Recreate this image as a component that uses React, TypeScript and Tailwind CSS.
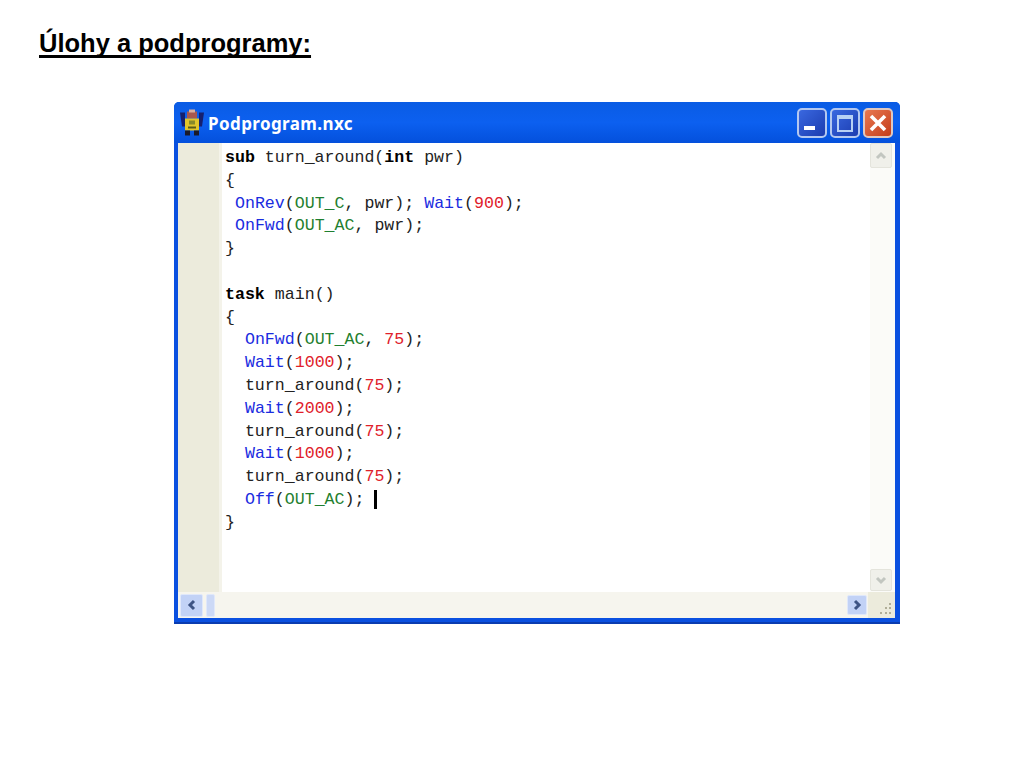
const KEYWORD = 'font-bold text-black';
const FN = 'text-[#1a2ce0]';
const CONST = 'text-[#1f7f2f]';
const NUM = 'text-[#e0202a]';
const PUNCT = 'text-[#222222]';

type Span = [string, string?];

// one entry per editor line
const LINES: Span[][] = [
  [['sub', KEYWORD], [' turn_around('], ['int', KEYWORD], [' pwr)']],
  [['{']],
  [[' '], ['OnRev', FN], ['('], ['OUT_C', CONST], [', pwr); '], ['Wait', FN], ['('], ['900', NUM], [');']],
  [[' '], ['OnFwd', FN], ['('], ['OUT_AC', CONST], [', pwr);']],
  [['}']],
  [[' ']],
  [['task', KEYWORD], [' main()']],
  [['{']],
  [['  '], ['OnFwd', FN], ['('], ['OUT_AC', CONST], [', '], ['75', NUM], [');']],
  [['  '], ['Wait', FN], ['('], ['1000', NUM], [');']],
  [['  turn_around('], ['75', NUM], [');']],
  [['  '], ['Wait', FN], ['('], ['2000', NUM], [');']],
  [['  turn_around('], ['75', NUM], [');']],
  [['  '], ['Wait', FN], ['('], ['1000', NUM], [');']],
  [['  turn_around('], ['75', NUM], [');']],
  [['  '], ['Off', FN], ['('], ['OUT_AC', CONST], ['); ']],
  [['}']],
];

function RobotIcon() {
  return (
    <svg width="24" height="27" viewBox="0 0 24 26" className="shrink-0">
      <path d="M0 3h5v14H2zM24 3h-5v14h3z" fill="#16206e" />
      <rect x="7" y="2" width="10" height="7" fill="#a8584e" />
      <rect x="9" y="0" width="6" height="3" fill="#d8b0a0" />
      <rect x="5" y="9" width="14" height="12" fill="#e2c52a" />
      <rect x="9" y="11" width="6" height="4" fill="#8a8a2a" />
      <rect x="8" y="17" width="8" height="2" fill="#5a5a1a" />
      <rect x="5" y="21" width="5" height="5" fill="#1a1a2a" />
      <rect x="14" y="21" width="5" height="5" fill="#1a1a2a" />
    </svg>
  );
}

function CaptionButtons() {
  return (
    <div className="flex gap-[3px] mr-[7px] mt-[1px]">
      <div className="w-[30px] h-[30px] rounded-[5px] border-2 border-[#b4c8f0] bg-gradient-to-br from-[#3a68e0] to-[#1c3cb0] flex items-end pl-[5px] pb-[6px]">
        <div className="w-[11px] h-[4px] bg-white" />
      </div>
      <div className="w-[30px] h-[30px] rounded-[5px] border-2 border-[#b4c8f0] bg-gradient-to-br from-[#3a68e0] to-[#1c3cb0] flex items-center justify-center">
        <div className="w-[16px] h-[17px] border-2 border-t-4 border-[#b8d0f4]" />
      </div>
      <div className="w-[30px] h-[30px] rounded-[5px] border-2 border-[#e0c8c0] bg-gradient-to-br from-[#e87850] to-[#c43c18] flex items-center justify-center">
        <svg width="18" height="18" viewBox="0 0 18 18">
          <path d="M2 2l14 14M16 2L2 16" stroke="#fff" strokeWidth="3.6" />
        </svg>
      </div>
    </div>
  );
}

function ScrollArrow({ d, tall }: { d: string; tall?: boolean }) {
  return (
    <div
      className={
        tall
          ? 'w-[22px] h-[25px] rounded-[2px] border border-[#e4e4dc] bg-[#f0f0ea] flex items-center justify-center'
          : 'w-[22px] h-[22px] rounded-[2px] border border-[#e4e4dc] bg-[#f0f0ea] flex items-center justify-center'
      }
    >
      <svg width="14" height="14" viewBox="0 0 14 14">
        <path d={d} fill="none" stroke="#c2c6c0" strokeWidth="3" />
      </svg>
    </div>
  );
}

export default function App() {
  return (
    <div className="w-[1024px] h-[768px] bg-white overflow-hidden font-['Liberation_Sans',sans-serif]">
      <h1 className="pt-[28px] pl-[39px] text-[25.5px] leading-[30px] font-bold text-black underline decoration-[3px] underline-offset-[3px] [text-decoration-skip-ink:none]">
        Úlohy a podprogramy:
      </h1>

      <div className="mt-[44px] ml-[174px] w-[726px] h-[522px] bg-[#0a50e0] rounded-t-[5px] border-b-2 border-[#0a3cb0] flex flex-col">
        {/* title bar */}
        <div className="h-[41px] shrink-0 flex items-center pl-[6px] rounded-t-[5px] bg-gradient-to-b from-[#0a5ce4] via-[#0c60f0] to-[#0450dc]">
          <RobotIcon />
          <span className="ml-[4px] mt-[3px] flex-1 font-['Noto_Sans',sans-serif] text-[17px] font-bold text-white tracking-[0.4px]">
            Podprogram.nxc
          </span>
          <CaptionButtons />
        </div>

        {/* client area */}
        <div className="flex-1 ml-[4px] mr-[5px] mb-[4px] flex flex-col bg-white min-h-0">
          <div className="flex-1 flex min-h-0">
            <div className="w-[41px] bg-[#ecebdc] shrink-0" />
            <div className="w-[3px] bg-[#f4f3ea] shrink-0" />
            <pre className="flex-1 pl-[3px] pt-[4px] font-['Liberation_Mono',monospace] text-[16.6px] leading-[22.8px] text-[#222222]">
              {LINES.map((line, i) => (
                <div key={i} className="h-[22.8px] flex">
                  <span className="whitespace-pre">
                    {line.map(([text, cls], j) => (
                      <span key={j} className={cls ?? PUNCT}>
                        {text}
                      </span>
                    ))}
                  </span>
                  {i === 15 && <span className="inline-block w-[3px] h-[19px] mt-[1px] bg-black" />}
                </div>
              ))}
            </pre>
            {/* vertical scrollbar */}
            <div className="w-[25px] shrink-0 bg-[#fbfbf8] flex flex-col justify-between pb-[1px]">
              <ScrollArrow tall d="M3 9l4-4 4 4" />
              <ScrollArrow d="M3 5l4 4 4-4" />
            </div>
          </div>

          {/* horizontal scrollbar */}
          <div className="h-[26px] shrink-0 bg-[#f6f5ee] flex items-center">
            <div className="ml-[2px] w-[23px] h-[23px] rounded-[2px] border border-[#e0e8fa] bg-[#c2d2f6] flex items-center justify-center">
              <svg width="14" height="14" viewBox="0 0 14 14">
                <path d="M9 3L5 7l4 4" fill="none" stroke="#3e5484" strokeWidth="3" />
              </svg>
            </div>
            <div className="ml-[3px] w-[9px] h-[23px] rounded-[2px] border border-[#e0e8fa] bg-[#ccd9f6]" />
            <div className="flex-1" />
            <div className="w-[20px] h-[20px] rounded-[2px] border border-[#e0e8fa] bg-[#c2d2f6] flex items-center justify-center">
              <svg width="14" height="14" viewBox="0 0 14 14">
                <path d="M5 3l4 4-4 4" fill="none" stroke="#3e5484" strokeWidth="3" />
              </svg>
            </div>
            <div className="ml-[1px] w-[27px] h-[26px] bg-[#ecebdc] flex items-end justify-end pr-[3px] pb-[3px]">
              <svg width="14" height="14" viewBox="0 0 14 14" fill="#b0ae98">
                <rect x="11" y="2" width="2" height="2" />
                <rect x="7" y="6" width="2" height="2" />
                <rect x="11" y="6" width="2" height="2" />
                <rect x="2" y="11" width="2" height="2" />
                <rect x="7" y="11" width="2" height="2" />
                <rect x="11" y="11" width="2" height="2" />
              </svg>
            </div>
          </div>
        </div>
      </div>
    </div>
  );
}
